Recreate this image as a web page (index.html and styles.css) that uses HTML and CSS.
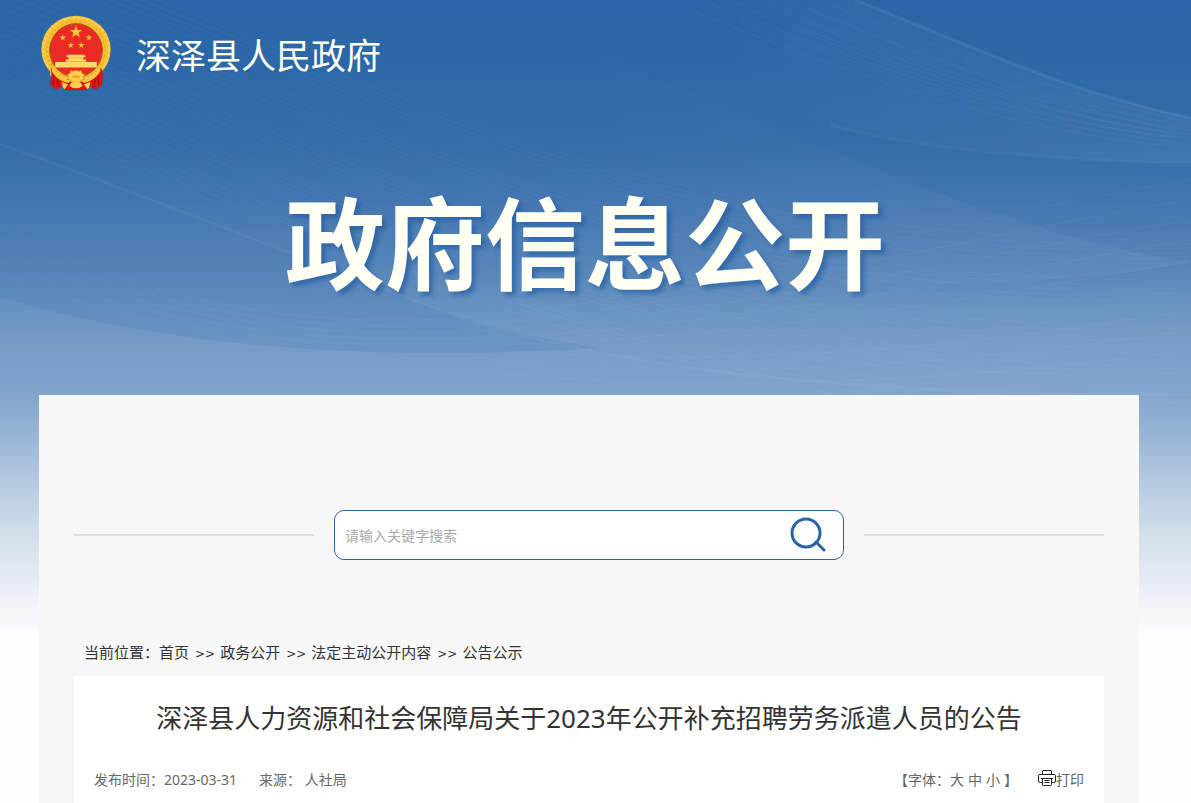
FILE: index.html
```html
<!DOCTYPE html>
<html lang="zh-CN">
<head>
  <meta charset="UTF-8">
  <meta name="viewport" content="width=device-width, initial-scale=1">
  <title>深泽县人民政府</title>
  <link rel="stylesheet" href="styles.css">
</head>
<body>
  <svg class="waves" viewBox="0 0 1191 640" preserveAspectRatio="none" fill="none" aria-hidden="true">
    <defs>
      <linearGradient id="fadeDown" x1="0" y1="0" x2="0" y2="1">
        <stop offset="0" stop-color="#2a66a7" stop-opacity="0"/>
        <stop offset="1" stop-color="#2f6fb0" stop-opacity=".18"/>
      </linearGradient>
      <linearGradient id="fadeRight" x1="0" y1="0" x2="1" y2="0">
        <stop offset=".2" stop-color="#fff" stop-opacity="0"/>
        <stop offset="1" stop-color="#fff" stop-opacity=".05"/>
      </linearGradient>
      <g id="strands" stroke="#fff" stroke-opacity=".03">
        <path d="M0 0C200 70 420 180 640 235S1000 300 1191 300"/>
        <path d="M0 7C200 76 420 184 640 240S1000 307 1191 304"/>
        <path d="M0 14C200 82 420 188 640 245S1000 314 1191 308"/>
        <path d="M0 21C200 88 420 192 640 250S1000 321 1191 312"/>
        <path d="M0 28C200 94 420 196 640 255S1000 328 1191 316"/>
      </g>
      <g id="rightStrands" stroke="#fff" stroke-opacity=".04">
        <path d="M700 0C880 70 1030 125 1191 138"/>
        <path d="M730 0C900 68 1040 118 1191 134"/>
        <path d="M760 0C920 66 1050 112 1191 130"/>
        <path d="M790 0C930 60 1060 106 1191 126"/>
        <path d="M820 0C940 50 1070 98 1191 122"/>
      </g>
    </defs>
    <path fill="url(#fadeDown)" d="M0 144C140 194 280 250 420 303C480 324 540 340 600 348C430 358 200 358 0 297Z"/>
    <path fill="url(#fadeRight)" d="M855 0C965 43 1060 90 1191 118V163C1060 161 920 148 830 125C760 100 680 60 600 0Z"/>
    <path fill="url(#fadeRight)" d="M560 40C780 122 990 235 1191 262C1080 282 970 286 840 283C700 250 560 170 420 100Z"/>
    <path fill="url(#fadeRight)" d="M420 303C600 370 800 395 1100 396H1191V285C1000 285 800 300 420 303Z" opacity=".4"/>
    <use href="#strands" y="-60"/>
    <use href="#strands" y="-20"/>
    <use href="#strands" y="20"/>
    <use href="#strands" y="60"/>
    <use href="#strands" y="95"/>
    <use href="#rightStrands"/>
    <use href="#rightStrands" x="-16" y="8"/>
    <g stroke="#fff" stroke-opacity=".04">
      <path d="M0 225C140 300 330 350 600 300S1000 210 1191 180"/>
      <path d="M0 237C140 308 330 352 600 310S1000 230 1191 200"/>
      <path d="M0 249C140 316 330 354 600 320S1000 250 1191 220"/>
      <path d="M0 261C140 324 330 356 600 330S1000 270 1191 240"/>
      <path d="M0 273C140 332 330 358 600 340S1000 290 1191 262"/>
      <path d="M500 350C740 370 980 345 1191 310"/>
      <path d="M500 362C740 382 980 362 1191 330"/>
      <path d="M500 374C740 394 980 379 1191 350"/>
    </g>
    <g stroke="#fff" stroke-width="3">
      <path d="M855 0C965 43 1060 90 1191 118" stroke-opacity=".07"/>
      <path d="M830 125C920 150 1060 161 1191 163" stroke-opacity=".04"/>
      <path d="M0 144C140 194 280 250 420 303S750 385 1010 392" stroke-opacity=".04"/>
    </g>
  </svg>

  <header class="header">
    <a class="brand" href="#">
      <svg class="emblem" viewBox="32 32 212 226" aria-hidden="true">
        <ellipse cx="138" cy="134" rx="105" ry="102" fill="#f5c035"/>
        <ellipse cx="138" cy="134" rx="99" ry="96" fill="none" stroke="#fbd254" stroke-width="6" stroke-dasharray="9 5"/>
        <ellipse cx="138" cy="136" rx="88" ry="86" fill="none" stroke="#eaa727" stroke-width="5" stroke-dasharray="5 9"/>
        <ellipse cx="138" cy="137" rx="80" ry="81" fill="#ec2a24" stroke="#9b6418" stroke-width="3"/>
        <g fill="#f4c542" stroke="#b37416" stroke-width="1">
          <path d="M138 61l5 14 14 0-11 9 4 14-12-8-12 8 4-14-11-9 14 0z"/>
          <path d="M98 88l2 7 8 0-6 5 2 7-6-4-6 4 2-7-6-5 8 0z"/>
          <path d="M177 88l2 7 8 0-6 5 2 7-6-4-6 4 2-7-6-5 8 0z"/>
          <path d="M122 111l2 7 8 0-6 5 2 7-6-4-6 4 2-7-6-5 8 0z"/>
          <path d="M154 111l2 7 8 0-6 5 2 7-6-4-6 4 2-7-6-5 8 0z"/>
        </g>
        <path fill="#ffda62" d="M112 150h52l3 5-3 4h-4v6h9v7h32v17H75v-17h32v-7h9v-6h-4l-3-4z"/>
        <path stroke="#dfa534" stroke-width="2" d="M114 160h48M108 171h60"/>
        <path fill="#ffd34d" d="M64 190c22 42 50 38 60 38h28c10 0 38 4 60-38l5 20c-18 32-42 38-65 38h-28c-23 0-47-6-65-38z"/>
        <path fill="#dd1714" stroke="#a80d0d" stroke-width="1" d="M62 191c18 27 39 39 62 42h28c23-3 44-15 62-42l5 15-3 38-22 12-10-11-16 12h-60l-16-12-10 11-21-12 3-38z"/>
        <path stroke="#a80d0d" stroke-width="3" fill="none" d="M72 211l-2 32M80 222l4 28M205 211l2 32M197 222l-5 28"/>
        <path fill="#f9c73d" d="M69 190c9 18 27 32 50 38l-3 8c-26-5-46-22-52-38zM207 190c-9 18-27 32-50 38l3 8c26-5 46-22 52-38z"/>
        <path fill="#ffd24a" stroke="#c17d16" stroke-width="2" d="M138 197l8 3 8-2 2 8 8 4-3 8 2 7-9 2-5 7-11-4-11 4-5-7-9-2 2-7-3-8 8-4 2-8 8 2z"/>
        <path fill="#f0a530" d="M127 211l5 4 6-5 6 5 5-4v10h-22z"/>
        <path fill="#ffcf4b" d="M138 230l14 5 6 9-9 6-11 2-11-2-9-6 6-9zM94 233l20 7-10 14-6-4zM182 233l-20 7 10 14 6-4z"/>
      </svg>
      <span class="brand-name">深泽县人民政府</span>
    </a>
    <h1 class="banner">政府信息公开</h1>
  </header>

  <main class="panel">
    <form class="search-row" onsubmit="return false">
      <span class="rule"></span>
      <div class="search-box">
        <input class="search-input" type="text" placeholder="请输入关键字搜索" aria-label="请输入关键字搜索">
        <button class="search-button" type="submit" aria-label="搜索">
          <svg width="36" height="36" viewBox="0 0 36 36" fill="none" stroke="#2a66a7" stroke-width="3" stroke-linecap="round">
            <circle cx="16" cy="16" r="14"/>
            <path d="M26 25l8 8"/>
          </svg>
        </button>
      </div>
      <span class="rule"></span>
    </form>

    <nav class="breadcrumb">
      <span>当前位置：</span>
      <a href="#">首页</a>
      <span class="sep">&gt;&gt;</span>
      <a href="#">政务公开</a>
      <span class="sep">&gt;&gt;</span>
      <a href="#">法定主动公开内容</a>
      <span class="sep">&gt;&gt;</span>
      <a href="#">公告公示</a>
    </nav>

    <article class="article">
      <h2 class="article-title">深泽县人力资源和社会保障局关于2023年公开补充招聘劳务派遣人员的公告</h2>
      <div class="meta">
        <div class="meta-info">
          <span>发布时间：<time datetime="2023-03-31">2023-03-31</time></span>
          <span>来源： 人社局</span>
        </div>
        <div class="meta-tools">
          <div class="font-size">
            <span>【字体：</span>
            <button type="button">大</button>
            <button type="button">中</button>
            <button type="button">小</button>
            <span>】</span>
          </div>
          <button class="print" type="button">
            <svg width="18" height="16" viewBox="0 0 18 16" fill="none" stroke="#222" aria-hidden="true">
              <path d="M4.500 4V1Q4.500 .5 5 .5H13Q13.500 .5 13.500 1V4"/>
              <path d="M4 12.500H2Q.5 12.500 .5 11V5.500Q.5 4.500 2 4.500H16Q17.500 4.500 17.500 5.500V11Q17.500 12.500 16 12.500H14"/>
              <path d="M3 8.500H15M4.500 8.500V14.500Q4.500 15.500 5.500 15.500H12.500Q13.500 15.500 13.500 14.500V8.500M6.500 10.500H11.500M6.500 12.500H11.500"/>
            </svg>打印
          </button>
        </div>
      </div>
    </article>
  </main>
</body>
</html>
```
FILE: styles.css
```css
* {
  box-sizing: border-box;
}

body {
  position: relative;
  display: flex;
  flex-direction: column;
  min-height: 100vh;
  margin: 0;
  padding: 0 52px 0 39px;
  font-family: "Noto Sans", "Noto Sans CJK SC", sans-serif;
  font-size: 14px;
  color: #333;
  background: #fefefe linear-gradient(#2a66a7 0, #2c68a8 70px, #336ca9 140px, #4376b0 200px, #5584b8 265px, #6490bf 300px, #759bc6 340px, #7fa2cb 385px, #95b3d3 430px, #b4c9e1 480px, #d0dde9 530px, #e4eaf3 575px, #f2f4f9 605px, #fefefe 640px) no-repeat;
}

a {
  color: inherit;
  text-decoration: none;
}

button {
  padding: 0;
  border: none;
  background: none;
  font: inherit;
  color: inherit;
  cursor: pointer;
}

/* light strands over the blue sky */
.waves {
  position: absolute;
  top: 0;
  left: 0;
  width: 100%;
  height: 640px;
  z-index: -1;
}

.header {
  height: 395px;
  padding-top: 15px;
  color: #fffff3;
}

.brand {
  display: flex;
  align-items: center;
  gap: 25px;
  padding-left: 2px;
}

.emblem {
  width: 70px;
  height: 76px;
}

.brand-name {
  padding-top: 6px;
  font-size: 35px;
  line-height: 50px;
}

.banner {
  margin: 82px 0 0;
  padding-right: 8px;
  font-size: 100px;
  line-height: 140px;
  font-weight: bold;
  text-align: center;
  text-shadow: 4px 4px 4px rgba(30, 90, 160, .6);
}

.panel {
  flex: 1;
  display: flex;
  flex-direction: column;
  padding: 115px 35px 0;
  background: #f7f7f7;
}

.search-row {
  display: flex;
  align-items: center;
  gap: 20px;
}

.rule {
  width: 240px;
  height: 2px;
  background: #ddd;
}

.search-box {
  flex: 1;
  display: flex;
  align-items: center;
  height: 50px;
  padding: 0 17px 0 10px;
  border: 1px solid #2a66a7;
  border-radius: 10px;
  background: #fff;
}

.search-input {
  flex: 1;
  min-width: 0;
  height: 48px;
  padding: 0;
  border: none;
  outline: none;
  background: none;
  font: inherit;
}

.search-input::placeholder {
  color: #aaa;
}

.search-button {
  display: flex;
}

.breadcrumb {
  display: flex;
  align-items: baseline;
  height: 44px;
  margin-top: 72px;
  padding: 9px 0 0 10px;
  font-size: 15px;
  line-height: 22px;
}

.sep {
  margin: 0 5px 0 6px;
  font-family: "DejaVu Sans", sans-serif;
  font-size: 12px;
}

.article {
  flex: 1;
  padding: 22px 20px 12px;
  background: #fff;
}

.article-title {
  margin: 0;
  font-size: 26px;
  line-height: 40px;
  font-weight: normal;
  text-align: center;
}

.meta {
  display: flex;
  justify-content: space-between;
  margin-top: 32px;
  line-height: 20px;
  color: #666;
}

.meta-info {
  display: flex;
  gap: 22px;
}

.meta-tools {
  display: flex;
  gap: 20px;
}

.font-size {
  display: flex;
  gap: 4px;
}

.font-size span:first-child {
  margin-right: -4px;
}

.print {
  display: flex;
}
```
